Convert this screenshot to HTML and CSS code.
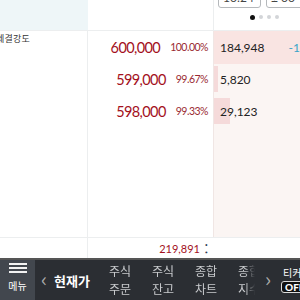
FILE: index.html
```html
<!DOCTYPE html>
<html lang="ko">

<head>
    <meta charset="UTF-8">
    <meta name="viewport" content="width=device-width, initial-scale=1.0">
    <title>현재가</title>
    <link rel="stylesheet" href="styles.css">
</head>

<body>
    <div class="board">
        <div class="head">
            <div class="head-side"></div>
            <div class="head-mid"></div>
            <div class="head-right">
                <div class="btns">
                    <span class="btn btn-a">10:24</span>
                    <span class="btn btn-b">± 00</span>
                </div>
                <div class="dots">
                    <i class="dot on"></i><i class="dot"></i><i class="dot"></i><i class="dot"></i>
                </div>
            </div>
        </div>

        <div class="body">
            <div class="side">
                <div class="side-label">체결강도</div>
            </div>
            <div class="prices">
                <div class="row">
                    <span class="price">600,000</span>
                    <span class="rate">100.00%</span>
                </div>
                <div class="row">
                    <span class="price">599,000</span>
                    <span class="rate">99.67%</span>
                </div>
                <div class="row">
                    <span class="price">598,000</span>
                    <span class="rate">99.33%</span>
                </div>
            </div>
            <div class="vols">
                <div class="vol vol-top">
                    <span class="num">184,948</span>
                    <span class="diff">-10</span>
                </div>
                <div class="vol">
                    <i class="bar" style="width: 4px"></i>
                    <span class="num">5,820</span>
                </div>
                <div class="vol">
                    <i class="bar" style="width: 16px"></i>
                    <span class="num">29,123</span>
                </div>
            </div>
        </div>

        <div class="total">
            <div class="total-side"></div>
            <div class="total-mid">
                <span class="total-num">219,891</span>
                <span class="total-more">⁚</span>
            </div>
            <div class="total-right"></div>
        </div>
    </div>

    <div class="nav">
        <div class="menu">
            <div class="burger"><i></i><i></i><i></i></div>
            <span>메뉴</span>
        </div>
        <div class="tabs">
            <span class="arrow">‹</span>
            <span class="tab-now">현재가</span>
            <div class="tab-list">
                <span class="tab">주식<br>주문</span>
                <span class="tab">주식<br>잔고</span>
                <span class="tab">종합<br>차트</span>
                <span class="tab">종합<br>지수</span>
            </div>
            <span class="arrow arrow-r">›</span>
            <div class="ticker">
                <span class="ticker-label">티커</span>
                <span class="off">OFF</span>
            </div>
        </div>
    </div>
</body>

</html>
```

FILE: styles.css
```css
body {
    margin: 0;
    width: 300px;
    height: 300px;
    overflow: hidden;
    background: #fff;
    font-family: Lato, "Noto Sans CJK KR", sans-serif;
}

.board {
    height: 260px;
    display: flex;
    flex-direction: column;
    border-bottom: 2px solid #555;
    box-sizing: border-box;
}

.head {
    height: 30px;
    display: grid;
    grid-template-columns: 88px 125px 87px;
    border-bottom: 1px solid #eceeef;
}

.head-side {
    background: #eef6f8;
}

.head-right {
    border-left: 1px solid #eceeef;
    overflow: hidden;
}

.btns {
    display: flex;
    gap: 5px;
    margin-top: -12px;
    padding-left: 4px;
    white-space: nowrap;
}

.btn {
    display: block;
    height: 18px;
    border: 1px solid #b5b8bb;
    border-radius: 3px;
    font-size: 12px;
    line-height: 18px;
    color: #444;
    padding: 0 4px;
    flex-shrink: 0;
}

.btn-a {
    width: 33px;
}

.btn-b {
    width: 40px;
}

.dots {
    display: flex;
    gap: 4px;
    justify-content: flex-end;
    padding-right: 21px;
    margin-top: 7px;
}

.dot {
    width: 4px;
    height: 4px;
    border-radius: 50%;
    background: #d3d5d8;
}

.dot.on {
    width: 5px;
    height: 5px;
    margin-top: -0.5px;
    background: #111;
}

.body {
    flex: 1;
    display: grid;
    grid-template-columns: 88px 125px 87px;
}

.side {
    border-right: 1px solid #eceeef;
    overflow: hidden;
}

.side-label {
    font-size: 9px;
    color: #333;
    margin-left: -4px;
    margin-top: 1px;
    letter-spacing: 0.2px;
}

.prices {
    display: flex;
    flex-direction: column;
}

.row {
    height: 32px;
    display: flex;
    align-items: center;
    justify-content: flex-end;
    gap: 10px;
    padding-right: 5px;
}

.price {
    font-size: 14.5px;
    letter-spacing: -0.6px;
    color: #a3101c;
}

.rate {
    font-size: 10.5px;
    letter-spacing: -0.5px;
    color: #9a2a32;
}

.vols {
    background: #fbf5f3;
    border-left: 1px solid #f0e6e4;
    overflow: hidden;
}

.vol {
    position: relative;
    height: 32px;
    display: flex;
    align-items: center;
    padding-left: 6px;
    font-size: 12px;
    color: #222;
    white-space: nowrap;
}

.vol-top {
    background: #f9e4e2;
    height: 33px;
    margin-bottom: -1px;
}

.num {
    position: relative;
}

.diff {
    margin-left: 24px;
    color: #3aa5c8;
}

.bar {
    position: absolute;
    left: 0;
    top: 3px;
    bottom: 3px;
    background: #f5dada;
}

.total {
    height: 20px;
    display: grid;
    grid-template-columns: 88px 125px 87px;
    border-top: 1px solid #eceeef;
}

.total-side {
    border-right: 1px solid #eceeef;
}

.total-mid {
    display: flex;
    align-items: center;
    justify-content: flex-end;
    padding-right: 5px;
    gap: 5px;
}

.total-num {
    font-size: 11px;
    color: #a3101c;
}

.total-more {
    font-size: 12px;
    color: #2b3a55;
    font-weight: bold;
}

.nav {
    height: 40px;
    display: flex;
    background: #2b2e33;
    color: #cfd1d4;
    font-family: "Noto Sans CJK KR", sans-serif;
}

.menu {
    width: 35px;
    background: #42474e;
    display: flex;
    flex-direction: column;
    align-items: center;
    padding-top: 2px;
    box-sizing: border-box;
    font-size: 10px;
    color: #fff;
    line-height: 12px;
}

.burger {
    width: 18px;
    display: flex;
    flex-direction: column;
    gap: 2px;
    margin: 1px 0 7px;
}

.burger i {
    height: 2px;
    background: #f2f2f2;
}

.tabs {
    flex: 1;
    display: flex;
    align-items: center;
    overflow: hidden;
}

.arrow {
    font-size: 20px;
    color: #aaa;
    margin: -4px 0 0 6px;
}

.tab-now {
    font-size: 13px;
    font-weight: bold;
    color: #fff;
    margin-left: 7px;
    width: 44px;
    flex-shrink: 0;
}

.tab-list {
    display: flex;
    width: 152px;
    margin-left: 11px;
    flex-shrink: 0;
    overflow: hidden;
    -webkit-mask-image: linear-gradient(to right, #000 136px, transparent 146px);
    mask-image: linear-gradient(to right, #000 136px, transparent 146px);
}

.tab {
    font-size: 12px;
    line-height: 18px;
    width: 43px;
    flex-shrink: 0;
    color: #c9cbce;
}

.arrow-r {
    margin-left: 4px;
    margin-right: 10px;
}

.ticker {
    display: flex;
    flex-direction: column;
    gap: 2px;
    white-space: nowrap;
}

.ticker-label {
    font-size: 10px;
    color: #fff;
    line-height: 12px;
    padding-left: 2px;
}

.off {
    font-family: Lato, sans-serif;
    font-weight: 900;
    font-size: 10px;
    line-height: 10px;
    color: #fff;
    border: 1px solid #ddd;
    border-radius: 3px;
    padding: 0 3px;
    background: #111;
}
```
